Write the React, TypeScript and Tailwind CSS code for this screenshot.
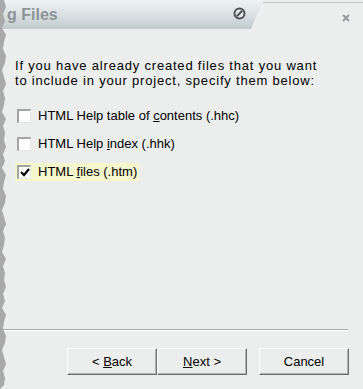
import type { ReactNode } from 'react'

const font = { fontFamily: '"Liberation Sans", Arial, sans-serif' }

function TornEdge() {
  // jagged left edge of the cropped screenshot
  const pts: string[] = ['0,0']
  const xs = [4, 6, 3, 5, 2, 6, 4, 3, 6, 5, 2, 4, 6, 3, 5, 4, 2, 6, 3, 5]
  for (let y = 0, i = 0; y <= 389; y += 7, i++) {
    pts.push(`${xs[i % xs.length]},${y}`)
  }
  pts.push('0,389')
  return (
    <svg className="absolute left-0 top-0" width="8" height="389" viewBox="0 0 8 389">
      <polygon points={pts.join(' ')} fill="#a9a9a9" />
    </svg>
  )
}

function Check({ checked }: { checked?: boolean }) {
  return (
    <span className="flex h-[14px] w-[14px] shrink-0 items-center justify-center border-l-2 border-t-2 border-l-[#a3a3a3] border-t-[#a3a3a3] border-r border-b border-r-[#e4e4e4] border-b-[#e4e4e4] bg-white">
      {checked && (
        <svg width="10" height="9" viewBox="0 0 10 9">
          <path d="M1 4 L4 7 L9 1" stroke="#000" strokeWidth="2.2" fill="none" />
        </svg>
      )}
    </span>
  )
}

function Row({ children, checked, hl }: { children: ReactNode; checked?: boolean; hl?: boolean }) {
  return (
    <div className="flex h-[28px] items-center">
      <div className={`flex h-[18px] items-center gap-[7px] pl-[2px] pr-[2px] ${hl ? 'bg-[#f6f6cc]' : ''}`}>
        <Check checked={checked} />
        <span className="text-[13px] text-black">{children}</span>
      </div>
    </div>
  )
}

function Btn({ children }: { children: ReactNode }) {
  return (
    <button className="flex h-[27px] w-[90px] items-center justify-center border border-t-white border-l-white border-r-[#6e6e6e] border-b-[#6e6e6e] bg-[#eceeee] text-[13px] text-black shadow-[inset_-1px_-1px_0_#b4b4b4]">
      <span className="whitespace-pre">{children}</span>
    </button>
  )
}

export default function App() {
  return (
    <div className="relative flex h-[389px] w-[363px] flex-col overflow-hidden bg-[#eceeee]" style={font}>
      <div className="flex h-[29px] shrink-0">
        <div
          className="flex w-[263px] shrink-0 items-center justify-between bg-[linear-gradient(#eef2f3,#dde3e5_45%,#c3cbce)] pl-[7px] pr-[17px]"
          style={{ clipPath: 'polygon(0 0, 263px 0, 251px 100%, 0 100%)' }}
        >
          <span className="text-[16px] font-bold text-[#8c9397]">g Files</span>
          <svg width="13" height="13" viewBox="0 0 13 13" className="mt-[-2px]">
            <circle cx="6.5" cy="6.5" r="5" fill="#e4e8ea" stroke="#4e5254" strokeWidth="2" />
            <path d="M3.8 9.2 L9.2 3.8" stroke="#4e5254" strokeWidth="2" />
          </svg>
        </div>
        <div className="flex flex-1 justify-end">
          <div className="mt-[2px] flex h-[27px] flex-1 justify-end border-t border-[#c4c8c9] pr-[13px] pt-[11px]">
            <svg width="8" height="8" viewBox="0 0 8 8">
              <path d="M1 1 L7 7 M7 1 L1 7" stroke="#959a9c" strokeWidth="2" />
            </svg>
          </div>
        </div>
      </div>

      <div className="pl-[15px]">
        <p className="mt-[29px] text-[13px] leading-[15px] tracking-[0.8px] text-black">
          If you have already created files that you want
          <br />
          to include in your project, specify them below:
        </p>
        <div className="mt-[14px] flex flex-col">
          <Row>
            HTML Help table of <span className="underline">c</span>ontents (.hhc)
          </Row>
          <Row>
            HTML Help <span className="underline">i</span>ndex (.hhk)
          </Row>
          <Row checked hl>
            HTML <span className="underline">f</span>iles (.htm)
          </Row>
        </div>
      </div>

      <div className="mr-[15px] mt-auto border-t border-b border-t-[#a8acad] border-b-white" />
      <div className="mb-[14px] mt-[17px] flex pl-[67px]">
        <Btn>
          &lt; <span className="underline">B</span>ack
        </Btn>
        <Btn>
          <span className="underline">N</span>ext &gt;
        </Btn>
        <div className="ml-[12px]">
          <Btn>Cancel</Btn>
        </div>
      </div>
      <TornEdge />
    </div>
  )
}
